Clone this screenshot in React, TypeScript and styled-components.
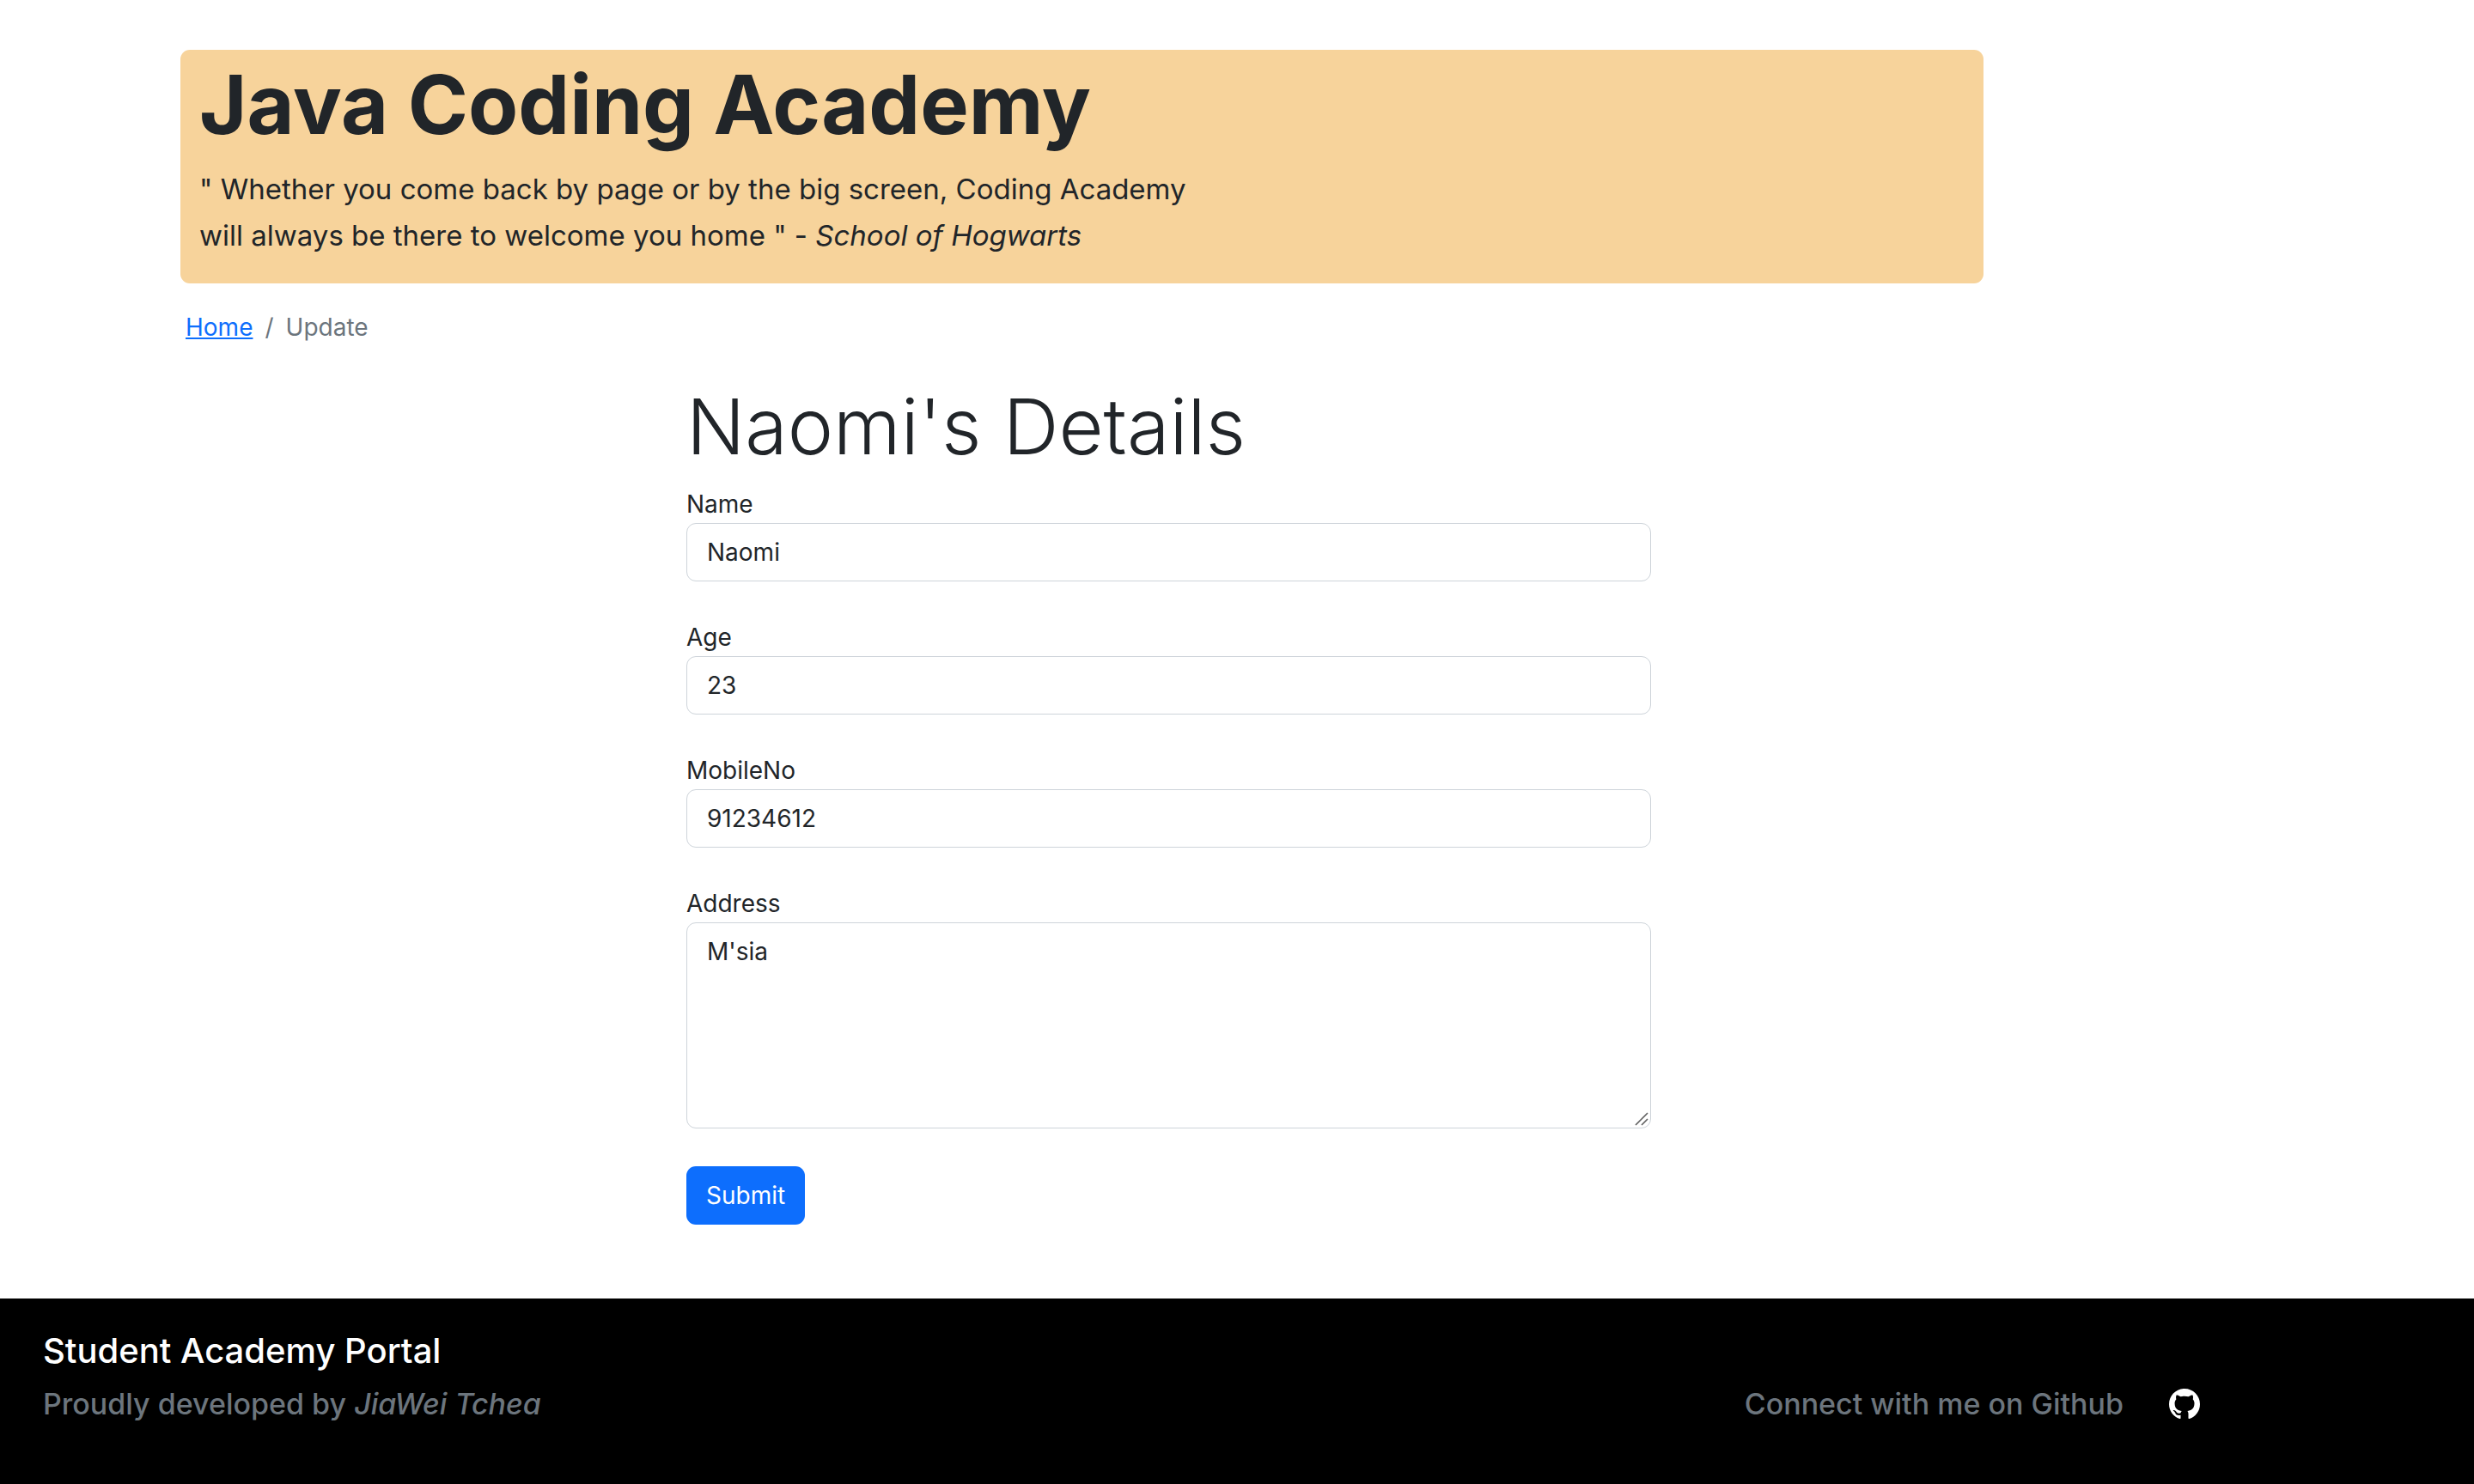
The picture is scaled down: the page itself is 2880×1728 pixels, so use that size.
import React from "react";
import styled, { createGlobalStyle } from "styled-components";
import { BsGithub } from "react-icons/bs";

const GlobalStyle = createGlobalStyle`
  *, *::before, *::after {
    box-sizing: border-box;
  }
  body {
    margin: 0;
    background: #fff;
    color: #212529;
    font-family: Inter, Roboto, "Liberation Sans", sans-serif;
    font-size: 28px;
    line-height: 43px;
  }
`;

const Page = styled.div`
  display: flex;
  flex-direction: column;
  min-height: 100vh;
`;

const Banner = styled.header`
  margin: 58px 571px 0 210px;
  padding: 3px 22px 29px;
  border-radius: 11px;
  background: #f7d39b;
`;

const BannerTitle = styled.h1`
  margin: 0 0 11px;
  font-size: 95px;
  font-weight: 700;
  line-height: 121px;
`;

const Lead = styled.p`
  margin: 0;
  font-size: 33px;
  line-height: 54px;
`;

const Breadcrumb = styled.nav`
  margin: 30px 571px 0 216px;
`;

const Crumbs = styled.ol`
  display: flex;
  margin: 0;
  padding: 0;
  list-style: none;
`;

const Crumb = styled.li`
  color: #6c757d;

  & + &::before {
    content: "/";
    padding: 0 14px;
  }
`;

const CrumbLink = styled.a`
  color: #0d6efd;
  text-decoration: underline;
`;

const Details = styled.main`
  margin: 33px 958px 86px 799px;
`;

const DetailsTitle = styled.h1`
  margin: 0 0 9px;
  font-size: 90px;
  font-weight: 300;
  line-height: 121px;
`;

const Form = styled.form`
  display: flex;
  flex-direction: column;
  align-items: flex-start;
  gap: 44px;
`;

const Field = styled.div`
  display: flex;
  flex-direction: column;
  width: 100%;
`;

const Input = styled.input`
  width: 100%;
  height: 68px;
  padding: 0 23px;
  border: 1px solid #ced4da;
  border-radius: 11px;
  background: #fff;
  color: inherit;
  font: inherit;
`;

const TextAreaBox = styled.div`
  position: relative;
  display: flex;
`;

const TextArea = styled.textarea`
  width: 100%;
  height: 240px;
  padding: 12px 23px;
  border: 1px solid #ced4da;
  border-radius: 11px;
  background: #fff;
  color: inherit;
  font: inherit;
  resize: vertical;

  &::-webkit-resizer {
    background: transparent;
  }
`;

const Grip = styled.svg`
  position: absolute;
  right: 3px;
  bottom: 3px;
  width: 16px;
  height: 16px;
  pointer-events: none;
`;

const SubmitButton = styled.button`
  height: 68px;
  padding: 0 23px;
  border: 0;
  border-radius: 11px;
  background: #0d6efd;
  color: #fff;
  font: inherit;
  cursor: pointer;
`;

const Footer = styled.footer`
  flex: 1;
  padding: 35px 319px 50px 50px;
  background: #000;
  font-weight: 500;
`;

const FooterTitle = styled.h4`
  margin: 0 0 14px;
  color: #fff;
  font-size: 40px;
  font-weight: 500;
  line-height: 52px;
`;

const FooterRow = styled.div`
  display: flex;
  align-items: center;
  justify-content: space-between;
  color: #6c757d;
  font-size: 34px;
  line-height: 43px;
`;

const Connect = styled.div`
  display: flex;
  align-items: center;
  gap: 53px;
`;

const GithubLink = styled.a`
  display: flex;
  color: #fff;
  font-size: 36px;
`;

const fields = [
  { id: "name", label: "Name", value: "Naomi" },
  { id: "age", label: "Age", value: "23" },
  { id: "mobileNo", label: "MobileNo", value: "91234612" },
];

export default function App() {
  return (
    <Page>
      <GlobalStyle />
      <Banner>
        <BannerTitle>Java Coding Academy</BannerTitle>
        <Lead>
          " Whether you come back by page or by the big screen, Coding Academy
          <br />
          will always be there to welcome you home " - <em>School of Hogwarts</em>
        </Lead>
      </Banner>
      <Breadcrumb aria-label="breadcrumb">
        <Crumbs>
          <Crumb>
            <CrumbLink href="#home">Home</CrumbLink>
          </Crumb>
          <Crumb aria-current="page">Update</Crumb>
        </Crumbs>
      </Breadcrumb>
      <Details>
        <DetailsTitle>Naomi's Details</DetailsTitle>
        <Form onSubmit={(event) => event.preventDefault()}>
          {fields.map((field) => (
            <Field key={field.id}>
              <label htmlFor={field.id}>{field.label}</label>
              <Input id={field.id} name={field.id} type="text" defaultValue={field.value} />
            </Field>
          ))}
          <Field>
            <label htmlFor="address">Address</label>
            <TextAreaBox>
              <TextArea id="address" name="address" defaultValue="M'sia" />
              <Grip viewBox="0 0 16 16" stroke="#5f5f5f" strokeWidth="1.6" aria-hidden="true">
                <path d="M1 15 15 1M8 15l7-7" />
              </Grip>
            </TextAreaBox>
          </Field>
          <SubmitButton type="submit">Submit</SubmitButton>
        </Form>
      </Details>
      <Footer>
        <FooterTitle>Student Academy Portal</FooterTitle>
        <FooterRow>
          <span>
            Proudly developed by <em>JiaWei Tchea</em>
          </span>
          <Connect>
            <span>Connect with me on Github</span>
            <GithubLink href="#github" aria-label="Github">
              <BsGithub />
            </GithubLink>
          </Connect>
        </FooterRow>
      </Footer>
    </Page>
  );
}
